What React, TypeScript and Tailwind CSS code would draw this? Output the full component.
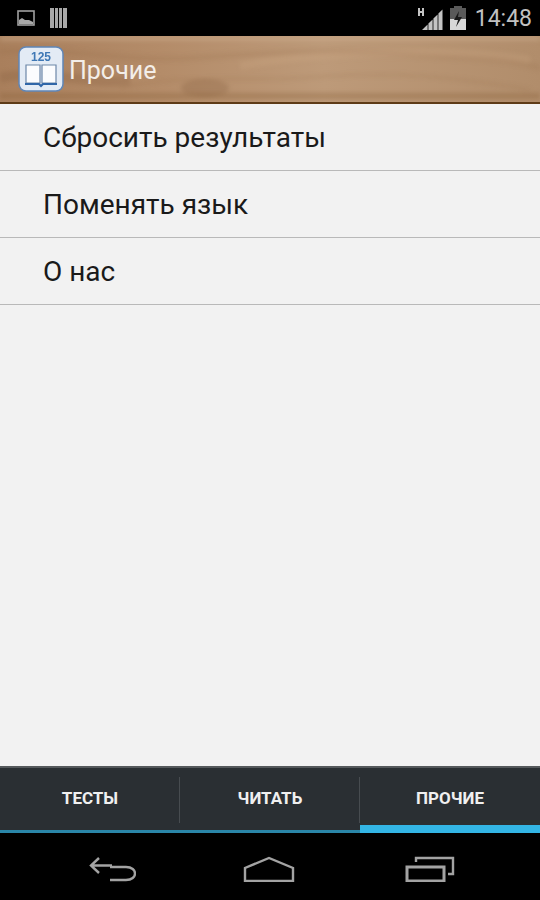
const items = ["Сбросить результаты", "Поменять язык", "О нас"];

function WoodGrain() {
  return (
    <svg className="absolute inset-0 h-full w-full blur-[2px]" viewBox="0 0 540 66" preserveAspectRatio="none" fill="none">
      <path d="M0 0H540V5H0Z" fill="#d3b79b" fillOpacity=".35" />
      <path d="M0 16C60 10 120 26 190 22S320 12 400 18 500 20 540 32" stroke="#8f6542" strokeOpacity=".14" strokeWidth="6" />
      <path d="M120 52C170 38 240 46 300 42S420 34 530 54" stroke="#8f6542" strokeOpacity=".14" strokeWidth="3" />
      <ellipse cx="205" cy="52" rx="24" ry="9" fill="#7f5636" fillOpacity=".25" />
      <path d="M0 42C40 32 90 50 130 44" stroke="#7a5233" strokeOpacity=".2" strokeWidth="10" />
      <path d="M240 30C300 18 440 10 530 24" stroke="#d2ab87" strokeOpacity=".22" strokeWidth="8" />
      <path d="M0 60H540" stroke="#8a6038" strokeOpacity=".35" strokeWidth="6" />
    </svg>
  );
}

function AppIcon() {
  return (
    <svg width="46" height="46" viewBox="0 0 46 46" fill="none" className="blur-[0.4px]">
      <rect x="1" y="1" width="44" height="44" rx="7" fill="#e3ebf5" stroke="#5f86b8" strokeWidth="1.5" />
      <text x="23" y="15" textAnchor="middle" fontSize="12" fontWeight="700" fontFamily="Liberation Sans, sans-serif" fill="#3f78b5">125</text>
      <path d="M8 19H22V37H8ZM24 19H38V37H24Z" fill="#fbfcfe" stroke="#6d87a8" strokeWidth="1.2" />
      <path d="M7 38H21L23 40L25 38H39" stroke="#2f66a8" strokeWidth="2" />
    </svg>
  );
}

function Tab({ label, active, divider }: { label: string; active?: boolean; divider?: boolean }) {
  return (
    <div className={`relative flex flex-1 items-center justify-center ${active ? "border-b-[8px] border-[#33b5e5] pt-[4px]" : "border-b-[3px] border-[#2a86a8] pb-[1px]"}`}>
      <span className="text-[17px] font-bold text-[#f0f0f0]">{label}</span>
      {divider && <div className="absolute right-0 top-[9px] h-[46px] w-[1px] bg-[#474c50]" />}
    </div>
  );
}

export default function App() {
  return (
    <div className="flex h-[900px] w-[540px] flex-col overflow-hidden bg-[#f2f2f2] font-['Roboto',sans-serif]">
      <div className="flex h-[36px] items-center bg-black pl-[17px] pr-[8px]">
        <svg className="blur-[0.5px]" width="18" height="16" viewBox="0 0 18 16" fill="none">
          <rect x="1" y="1" width="16" height="14" stroke="#a0a0a0" strokeWidth="1.6" />
          <path d="M2 14V10L5 8L8 10L12 10L16 12V14Z" fill="#a8a8a8" />
        </svg>
        <svg className="ml-[15px] blur-[0.6px]" width="18" height="20" viewBox="0 0 18 20" fill="#a8a8a8">
          <path d="M0 0H4V20H0ZM5 0H8V20H5ZM9 0H12V20H9ZM13 0H17V20H13Z" />
        </svg>
        <div className="ml-auto flex items-center">
          <svg className="blur-[0.3px]" width="26" height="24" viewBox="0 0 26 24" fill="#c4c4c4">
            <path d="M1 2H3V5H5V2H7V10H5V7H3V10H1Z" />
            <path d="M5 24L10.6 18.4V24ZM11.4 24V17.6L15.6 13.4V24ZM16.4 24V12.6L20.6 8.4V24ZM21.4 24V7.6L25.5 3.5V24Z" />
          </svg>
          <svg className="ml-[7px] blur-[0.4px]" width="16" height="24" viewBox="0 0 16 24">
            <path d="M4 0H12V2H16V24H0V2H4Z" fill="#5a5a5a" />
            <path d="M0 13H16V24H0Z" fill="#d8d8d8" />
            <path d="M9 5L4 14H8L6 21L12 11H8Z" fill="#1a1a1a" />
          </svg>
          <span className="ml-[9px] text-[23px] leading-none text-[#c2c2c2]">14:48</span>
        </div>
      </div>

      <div className="relative flex h-[68px] items-center overflow-hidden border-b-2 border-[#5e3b17] bg-[linear-gradient(90deg,#a97f5c_0%,#b48c69_30%,#bd9a79_60%,#b18d6b_100%)] pl-[18px]">
        <WoodGrain />
        <div className="relative flex items-center gap-[5px]">
          <AppIcon />
          <span className="pt-[4px] text-[25px] text-[#f3eee9]">Прочие</span>
        </div>
      </div>

      <div className="flex-1">
        {items.map((item) => (
          <div key={item} className="flex h-[67px] items-center border-b border-[#b9b9b9] pl-[43px] pt-[1px] text-[28px] text-[#1a1a1a]">
            {item}
          </div>
        ))}
      </div>

      <div className="flex h-[67px] border-t-2 border-[#55595c] bg-[#2a2f33]">
        <Tab label="ТЕСТЫ" divider />
        <Tab label="ЧИТАТЬ" divider />
        <Tab label="ПРОЧИЕ" active />
      </div>

      <div className="flex h-[67px] items-center bg-black pl-[88px] pr-[85px] pt-[5px]">
        <svg width="48" height="26" viewBox="0 0 48 26" fill="none" stroke="#a3a3a3" strokeWidth="2.4">
          <path d="M11 2L3 9.5L11 17M3 9.5H24" />
          <path d="M22 11H38C50 11 50 24 38 24H22" />
        </svg>
        <svg className="ml-[107px]" width="52" height="26" viewBox="0 0 52 26" fill="none" stroke="#a3a3a3" strokeWidth="2.4">
          <path d="M2 25V12L26 2L50 12V25Z" />
        </svg>
        <svg className="ml-auto" width="50" height="26" viewBox="0 0 50 26" fill="none" stroke="#a3a3a3" strokeWidth="2.4">
          <path d="M2 11H39V25H2Z" strokeWidth="3" />
          <path d="M11 6V2H48V18H43" />
        </svg>
      </div>
    </div>
  );
}
